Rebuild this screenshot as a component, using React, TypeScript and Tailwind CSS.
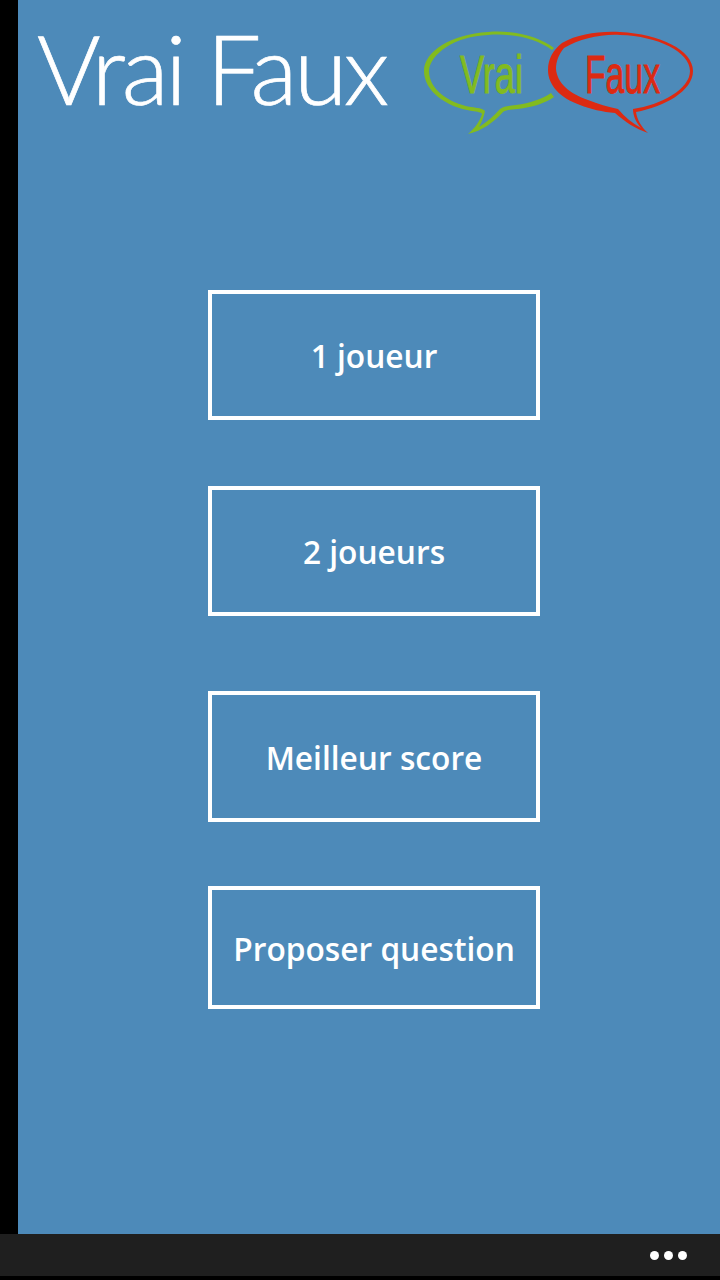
const menuItems = [
  { label: "1 joueur", height: "h-[130px]", margin: "mt-0" },
  { label: "2 joueurs", height: "h-[130px]", margin: "mt-[66px]" },
  { label: "Meilleur score", height: "h-[131px]", margin: "mt-[75px]" },
  { label: "Proposer question", height: "h-[123px]", margin: "mt-[64px]" },
];

const Logo = () => (
  <svg width="300" height="130" viewBox="0 0 300 130" className="block">
    {/* green bubble */}
    <path
      d="M144 33 C128 21 104 15 78 17 C42 19 14 36 14 56 C14 76 36 92 62 96 C68 97 71 97 72 99 C70 106 65 113 58 119 C72 116 84 107 93 97 C97 94 101 95 108 94 C122 92 134 89 144 82 L141 78 C132 84 120 88 106 90 C99 91 94 91 90 94 C84 101 77 107 69 112 C72 107 74 101 75 96 C72 93 68 93 61 92 C38 88 19 74 19 56 C20 39 45 21 78 20 C104 18 127 24 142 35 Z"
      fill="#82bb1f"
    />
    {/* red bubble */}
    <path
      fillRule="evenodd"
      d="M152 28 C168 19 188 16 210 17 C250 19 283 35 283 56 C283 76 254 92 226 97 C227 104 231 112 238 118 C226 114 215 107 205 98 C193 97 180 94 170 90 C150 83 138 70 138 55 C138 44 143 35 152 28 Z M154 33 C149 39 146 46 146 54 C147 68 160 79 178 85 C188 89 198 92 208 94 C215 102 222 108 231 113 C226 107 223 101 223 94 C251 90 280 74 280 56 C280 37 248 21 210 20 C190 19 170 24 154 33 Z"
      fill="#dc2a12"
    />
    <text
      x="50"
      y="78"
      textLength="63"
      lengthAdjust="spacingAndGlyphs"
      fill="#82bb1f"
      stroke="#82bb1f"
      strokeWidth="0.9"
      fontSize="54"
      fontFamily="'Liberation Sans', sans-serif"
    >
      Vrai
    </text>
    <text
      x="175"
      y="78"
      textLength="75"
      lengthAdjust="spacingAndGlyphs"
      fill="#dc2a12"
      stroke="#dc2a12"
      strokeWidth="0.9"
      fontSize="54"
      fontFamily="'Liberation Sans', sans-serif"
    >
      Faux
    </text>
  </svg>
);

const App = () => {
  return (
    <div className="flex h-[1280px] w-[720px] flex-col overflow-hidden bg-black font-['Open_Sans',sans-serif] text-white">
      <div className="flex min-h-0 flex-1">
        <div className="w-[18px] shrink-0 bg-black"></div>
        <div className="flex flex-1 flex-col bg-[#4d8ab9]">
          <div className="flex h-[290px] items-start">
            <h1 className="w-[392px] shrink-0 pl-[19px] pt-[10px] font-['Lato',sans-serif] whitespace-nowrap text-[97px] leading-[116px] font-light tracking-[-3.4px] [-webkit-text-stroke:0.7px_white]">
              Vrai Faux
            </h1>
            <div className="mt-[15px]">
              <Logo />
            </div>
          </div>
          <div className="flex flex-col pl-[190px]">
            {menuItems.map((item) => (
              <button
                key={item.label}
                className={`flex w-[332px] items-center justify-center border-4 border-white pt-[2px] text-[31.7px] font-semibold ${item.height} ${item.margin}`}
              >
                {item.label}
              </button>
            ))}
          </div>
        </div>
      </div>
      <div className="mb-[4px] flex h-[42px] shrink-0 items-center justify-end gap-[5px] bg-[#1f1f1f] pr-[33px]">
        <span className="h-[9px] w-[9px] rounded-full bg-white"></span>
        <span className="h-[9px] w-[9px] rounded-full bg-white"></span>
        <span className="h-[9px] w-[9px] rounded-full bg-white"></span>
      </div>
    </div>
  );
};

export default App;
